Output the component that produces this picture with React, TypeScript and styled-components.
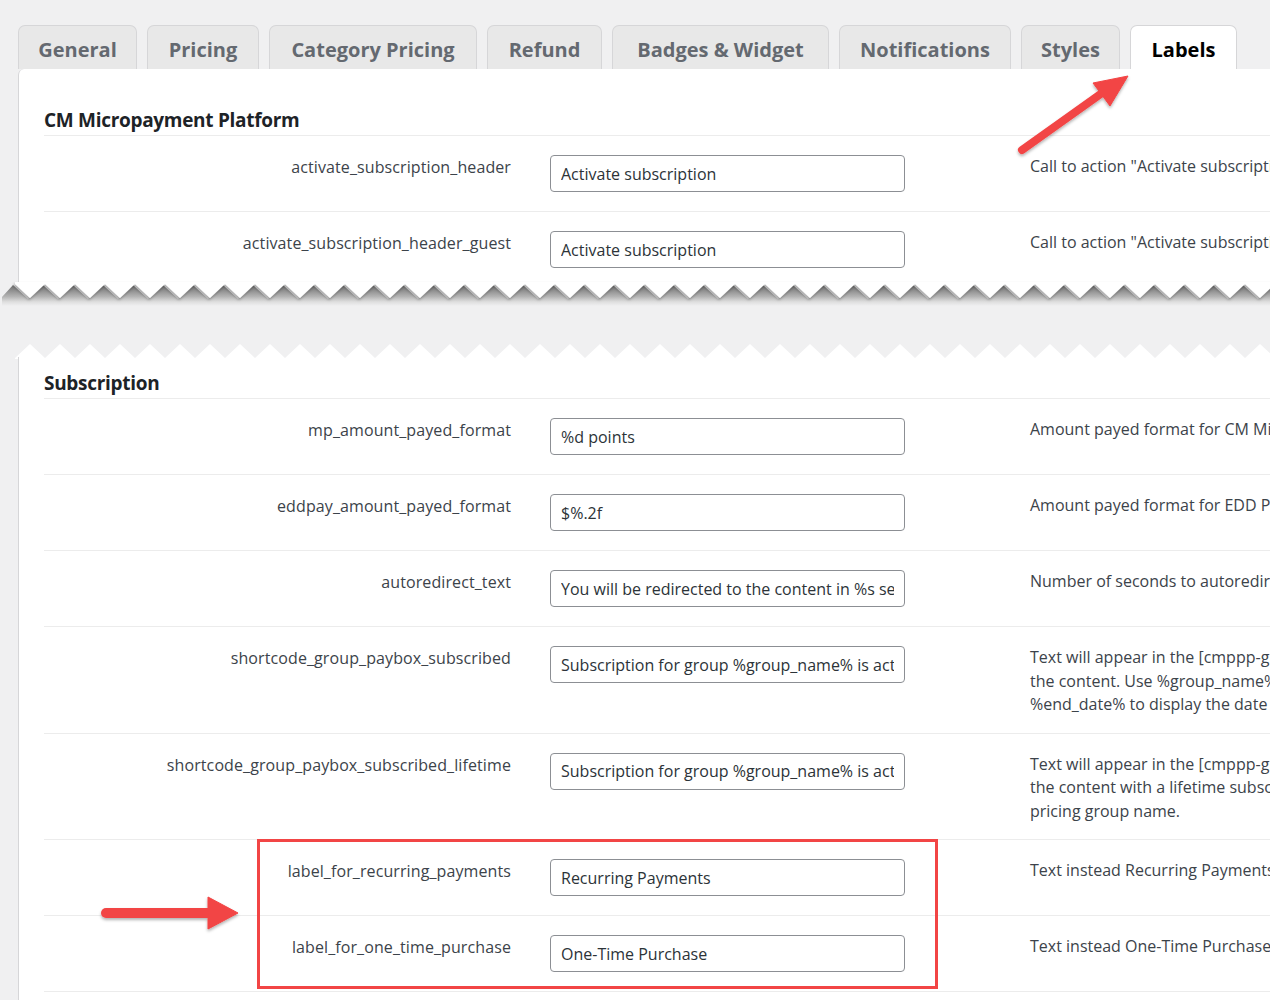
import React from "react";
import styled, { createGlobalStyle } from "styled-components";

const GlobalStyle = createGlobalStyle`
  html, body {
    margin: 0;
    padding: 0;
    overflow: hidden;
    background: #f0f0f1;
  }
  body {
    font-family: "Open Sans", "Noto Sans", Arial, sans-serif;
    color: #3c434a;
  }
`;

const Page = styled.div`
  position: relative;
  width: 1600px;
  padding: 25px 0 0 18px;
`;

const TabBar = styled.div`
  display: flex;
  gap: 10px;
  height: 44px;
`;

const Tab = styled.div<{ $w: number; $active?: boolean }>`
  width: ${(p) => p.$w}px;
  box-sizing: border-box;
  display: flex;
  align-items: center;
  justify-content: center;
  border: 1px solid #d6d6d8;
  border-bottom: none;
  border-radius: 7px 7px 0 0;
  background: ${(p) => (p.$active ? "#fff" : "#e8e8e8")};
  color: ${(p) => (p.$active ? "#000" : "#646970")};
  font-size: 20px;
  font-weight: 700;
  padding-top: 4px;
`;

const Panel = styled.div<{ $h?: number; $top?: boolean }>`
  background: #fff;
  border-left: 1px solid #d6d6d8;
  border-top-left-radius: ${(p) => (p.$top ? "6px" : "0")};
  padding-left: 25px;
  padding-bottom: ${(p) => (p.$h ? "0" : "60px")};
  height: ${(p) => (p.$h ? `${p.$h}px` : "auto")};
  overflow: hidden;
`;

const Heading = styled.h2<{ $pt: number }>`
  margin: 0;
  padding: ${(p) => p.$pt}px 0 2px;
  font-size: 19px;
  line-height: 26px;
  font-weight: 700;
  color: #1d2327;
  letter-spacing: -0.3px;
  border-bottom: 1px solid #ececec;
`;

const Row = styled.div`
  display: grid;
  grid-template-columns: 487px 499px 1fr;
  align-items: start;
  padding: 19px 0 16px;
  border-bottom: 1px solid #ececec;
`;

const Label = styled.div`
  text-align: right;
  padding-right: 20px;
  font-size: 16px;
  line-height: 24px;
  color: #3c434a;
  letter-spacing: 0.1px;
`;

const InputCell = styled.div`
  padding-left: 19px;
  height: 40px;
`;

const TextInput = styled.input`
  box-sizing: border-box;
  width: 355px;
  height: 37px;
  margin: 0;
  padding: 0 10px;
  border: 1px solid #8c8f94;
  border-radius: 4px;
  background: #fff;
  color: #2c3338;
  font-family: inherit;
  font-size: 16px;
  outline: none;
`;

const Desc = styled.div`
  font-size: 16px;
  line-height: 23.5px;
  color: #3c434a;
  white-space: nowrap;
`;

const TearSvg = styled.svg`
  display: block;
  margin-left: -18px;
  overflow: visible;
`;

const Gap = styled.div`
  height: 40px;
`;

const Highlight = styled.div`
  position: absolute;
  left: 257px;
  top: 839px;
  width: 681px;
  height: 150px;
  box-sizing: border-box;
  border: 3px solid #f24545;
  pointer-events: none;
`;

const Overlay = styled.svg`
  position: absolute;
  left: 0;
  top: 0;
  pointer-events: none;
`;

type Field = { name: string; value: string; desc: React.ReactNode };

const platformFields: Field[] = [
  {
    name: "activate_subscription_header",
    value: "Activate subscription",
    desc: 'Call to action "Activate subscription" header',
  },
  {
    name: "activate_subscription_header_guest",
    value: "Activate subscription",
    desc: 'Call to action "Activate subscription" header for guests',
  },
];

const subscriptionFields: Field[] = [
  {
    name: "mp_amount_payed_format",
    value: "%d points",
    desc: "Amount payed format for CM Micropayment Platform",
  },
  {
    name: "eddpay_amount_payed_format",
    value: "$%.2f",
    desc: "Amount payed format for EDD Payments",
  },
  {
    name: "autoredirect_text",
    value: "You will be redirected to the content in %s seconds",
    desc: "Number of seconds to autoredirect text",
  },
  {
    name: "shortcode_group_paybox_subscribed",
    value: "Subscription for group %group_name% is active until %end_date%",
    desc: (
      <>
        Text will appear in the [cmppp-group-paybox] shortcode if user has access to
        <br />
        the content. Use %group_name% to display the pricing group name and
        <br />
        %end_date% to display the date when subscription ends.
      </>
    ),
  },
  {
    name: "shortcode_group_paybox_subscribed_lifetime",
    value: "Subscription for group %group_name% is active for lifetime",
    desc: (
      <>
        Text will appear in the [cmppp-group-paybox] shortcode if user has access to
        <br />
        the content with a lifetime subscription. Use %group_name% to display the
        <br />
        pricing group name.
      </>
    ),
  },
  {
    name: "label_for_recurring_payments",
    value: "Recurring Payments",
    desc: "Text instead Recurring Payments",
  },
  {
    name: "label_for_one_time_purchase",
    value: "One-Time Purchase",
    desc: "Text instead One-Time Purchase",
  },
];

const tabs = [
  { label: "General", w: 119 },
  { label: "Pricing", w: 112 },
  { label: "Category Pricing", w: 208 },
  { label: "Refund", w: 115 },
  { label: "Badges & Widget", w: 217 },
  { label: "Notifications", w: 172 },
  { label: "Styles", w: 99 },
  { label: "Labels", w: 107, active: true },
];

function FieldRow({ f }: { f: Field }) {
  return (
    <Row>
      <Label>{f.name}</Label>
      <InputCell>
        <TextInput type="text" defaultValue={f.value} readOnly />
      </InputCell>
      <Desc>{f.desc}</Desc>
    </Row>
  );
}

// zigzag edges of the "torn" screenshot
function zigzag(start: number, width: number, period: number, yTop: number, yBot: number, down: boolean) {
  const pts: string[] = [];
  for (let x = start; x <= width + period; x += period / 2) {
    const i = Math.round((x - start) / (period / 2));
    const y = i % 2 === 0 ? (down ? yTop : yBot) : down ? yBot : yTop;
    pts.push(`${x},${y}`);
  }
  return pts;
}

function TornBottom() {
  const w = 1620;
  const edge = zigzag(15, w, 30, 0, 14, true);
  const poly = [`15,-2`, ...edge, `${w + 30},-2`].join(" ");
  const band = [`4,12`, ...zigzag(15, w, 30, 0, 14, true), `${w + 30},21`, `4,21`].join(" ");
  return (
    <TearSvg width={w} height={20}>
      <defs>
        <linearGradient id="tearGrad" x1="0" y1="0" x2="0" y2="1">
          <stop offset="0" stopColor="#6e6e6e" />
          <stop offset="0.55" stopColor="#b4b4b4" />
          <stop offset="0.8" stopColor="#dedede" />
          <stop offset="1" stopColor="#f0f0f1" />
        </linearGradient>
        <filter id="tearShadow" x="-5%" y="-50%" width="110%" height="250%">
          <feDropShadow dx="-1" dy="2" stdDeviation="1.5" floodColor="#000" floodOpacity="0.35" />
        </filter>
      </defs>
      <polygon points={band} fill="url(#tearGrad)" transform="translate(-2,1)" />
      <polygon points={poly} fill="#fff" filter="url(#tearShadow)" />
    </TearSvg>
  );
}

function TornTop() {
  const w = 1620;
  const edge = zigzag(15, w, 30, 0, 14, false);
  const poly = [`15,15`, ...edge, `${w + 30},15`].join(" ");
  return (
    <TearSvg width={w} height={14}>
      <polygon points={poly} fill="#fff" />
      <line x1="18.5" y1="13" x2="18.5" y2="15" stroke="#d6d6d8" />
    </TearSvg>
  );
}

export default function App() {
  return (
    <>
      <GlobalStyle />
      <Page>
        <TabBar>
          {tabs.map((t) => (
            <Tab key={t.label} $w={t.w} $active={t.active}>
              {t.label}
            </Tab>
          ))}
        </TabBar>

        <Panel $h={215} $top>
          <Heading $pt={38}>CM Micropayment Platform</Heading>
          {platformFields.map((f) => (
            <FieldRow key={f.name} f={f} />
          ))}
        </Panel>
        <TornBottom />
        <Gap />
        <TornTop />
        <Panel>
          <Heading $pt={12}>Subscription</Heading>
          {subscriptionFields.map((f) => (
            <FieldRow key={f.name} f={f} />
          ))}
        </Panel>

        <Highlight />
        <Overlay width={1270} height={1000}>
          <defs>
            <filter id="arrowShadow" x="-20%" y="-20%" width="140%" height="140%">
              <feDropShadow dx="0" dy="2" stdDeviation="1.5" floodColor="#000" floodOpacity="0.3" />
            </filter>
          </defs>
          <g fill="#f24545" stroke="#f24545" filter="url(#arrowShadow)">
            <line x1="1022" y1="150" x2="1102" y2="93" strokeWidth="8" strokeLinecap="round" />
            <polygon points="1128,76 1093,83 1110,106" strokeWidth="1" strokeLinejoin="round" />
            <line x1="106" y1="913" x2="212" y2="913" strokeWidth="10" strokeLinecap="round" />
            <polygon points="208,897 238,913 208,929" strokeWidth="1" strokeLinejoin="round" />
          </g>
        </Overlay>
      </Page>
    </>
  );
}
